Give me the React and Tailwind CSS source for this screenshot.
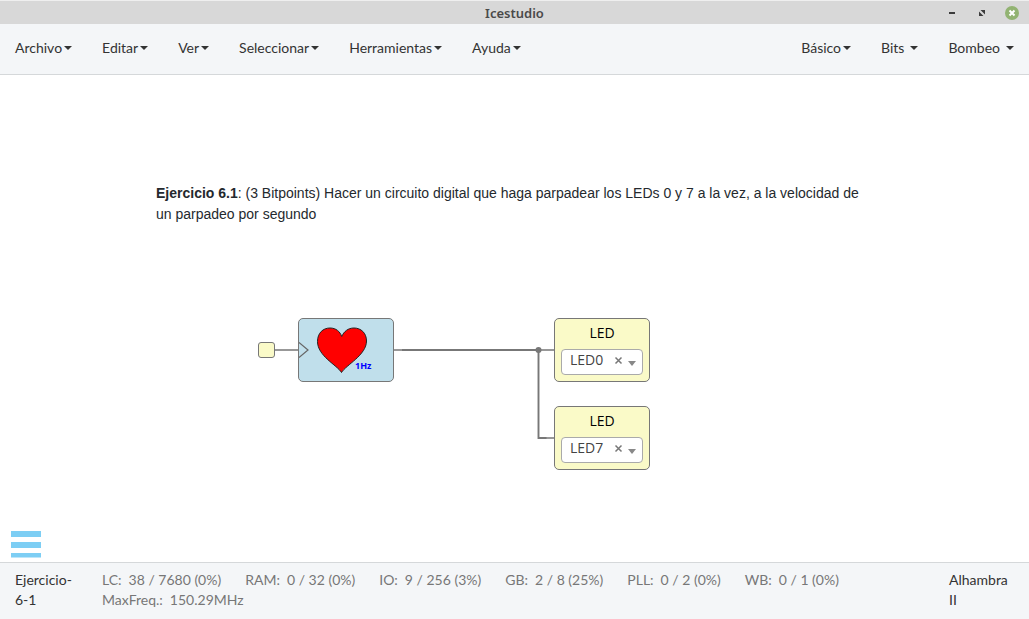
const mainMenus = ["Archivo", "Editar", "Ver", "Seleccionar", "Herramientas", "Ayuda"];

const collections = [
  { name: "Básico", spaced: false },
  { name: "Bits", spaced: true },
  { name: "Bombeo", spaced: true },
];

const resources = [
  ["LC:", "38 / 7680 (0%)"],
  ["RAM:", "0 / 32 (0%)"],
  ["IO:", "9 / 256 (3%)"],
  ["GB:", "2 / 8 (25%)"],
  ["PLL:", "0 / 2 (0%)"],
  ["WB:", "0 / 1 (0%)"],
  ["MaxFreq.:", "150.29MHz"],
];

function Caret({ className }) {
  return (
    <svg aria-hidden="true" viewBox="0 0 8 4" preserveAspectRatio="none" className={`w-2 ${className}`}>
      <path d="M0 0h8L4 4z" fill="currentColor" />
    </svg>
  );
}

function MenuButton({ label, spaced }) {
  return (
    <button type="button" className="flex items-center px-[15px] pt-[14px] pb-4 leading-5">
      {label}
      <Caret className={spaced ? "ml-[6px] h-1" : "ml-[2px] h-1"} />
    </button>
  );
}

function TitleBar() {
  return (
    <header className="relative flex h-6 items-center justify-center border-t border-[#efefef] bg-[#d8d8d8]">
      <h1 className="font-['Noto_Sans',sans-serif] text-[13px] leading-5 font-semibold text-[#4a4a4a]">Icestudio</h1>
      <div className="absolute inset-y-0 right-[10px] flex items-center gap-4">
        <button type="button" aria-label="Minimizar" className="size-[14px]">
          <svg viewBox="0 0 14 14" className="size-full">
            <path d="M4 6h6v2H4z" fill="#3c3c3c" />
          </svg>
        </button>
        <button type="button" aria-label="Maximizar" className="size-[14px]">
          <svg viewBox="0 0 14 14" className="size-full">
            <path d="M5.500 4H10v4.500zM4 5.500V10h4.500z" fill="#3c3c3c" />
          </svg>
        </button>
        <button type="button" aria-label="Cerrar" className="size-[14px]">
          <svg viewBox="0 0 14 14" className="size-full">
            <circle cx="7" cy="7" r="7" fill="#92b372" />
            <path d="M4.5 4.5l5 5M9.5 4.5l-5 5" stroke="#fff" strokeWidth="2" />
          </svg>
        </button>
      </div>
    </header>
  );
}

function LedBlock({ pin, className }) {
  const id = `pin-${pin}`;
  return (
    <div className={`absolute h-16 w-24 rounded-[5px] border border-[#777] bg-[#fafac8] px-[6px] pt-1 ${className}`}>
      <label htmlFor={id} className="block text-center font-['Open_Sans',sans-serif] text-[14px] leading-5 text-black">
        LED
      </label>
      <div className="relative mt-[6px] h-[26px]">
        <select
          id={id}
          defaultValue={pin}
          className="block size-full appearance-none rounded-[4px] border border-[#aaa] bg-white pb-1 pl-2 font-['Open_Sans',sans-serif] text-[14px] leading-5 text-[#444]"
        >
          <option>LED0</option>
          <option>LED7</option>
        </select>
        <button type="button" aria-label="Quitar pin" className="absolute top-[7px] right-5 size-[9px]">
          <svg viewBox="0 0 9 9" className="size-full">
            <path d="M1.500 1.500l6 6M7.500 1.500l-6 6" stroke="#777" strokeWidth="1.500" />
          </svg>
        </button>
        <Caret className="pointer-events-none absolute top-3 right-[7px] h-[5px] text-[#888]" />
      </div>
    </div>
  );
}

function Circuit() {
  return (
    <div className="absolute top-[243px] left-[258px] h-[152px] w-[392px]">
      <svg aria-hidden="true" viewBox="0 0 392 152" className="absolute inset-0 size-full" fill="none" stroke="#777">
        <path d="M16 32h24M136 32h8M280 32h16M288 120h8" strokeWidth="1.500" />
        <path d="M144 32h137M280.500 32v88h8" strokeWidth="1.900" />
        <circle cx="280.500" cy="32" r="3" fill="#777" stroke="none" />
      </svg>
      <div className="absolute top-6 left-0 h-4 w-[17px] rounded-[3px] border border-[#777] bg-[#fafac8]" />
      <div className="absolute top-0 left-10 h-16 w-24 rounded-[5px] border border-[#777] bg-[#c0dfeb]">
        <svg role="img" aria-label="Corazón a 1Hz" viewBox="0 0 94 62" className="size-full">
          <path d="M0 23.500l9 7.500-9 7.500" fill="none" stroke="#666" strokeWidth="1.200" />
          <path
            d="M42.500 53.500C38 46 18.500 37 18.500 22.500C18.500 14 24 9 31 9C37 9 41 12.500 42.700 17.500C45 12.500 49 9 55 9C62 9 67.500 14 67.500 22C67.500 36 47 46 42.500 53.500Z"
            fill="#f00"
            stroke="#222"
          />
          <text x="56" y="50" fill="#00f" fontSize="9" fontWeight="700" fontFamily="'Open Sans', sans-serif">
            1Hz
          </text>
        </svg>
      </div>
      <LedBlock pin="LED0" className="top-0 right-0" />
      <LedBlock pin="LED7" className="right-0 bottom-0" />
    </div>
  );
}

export default function App() {
  return (
    <div className="flex min-h-screen flex-col bg-white font-['Lato',sans-serif] text-[14px] leading-5 text-[#333]">
      <TitleBar />
      <nav className="flex justify-between border-b border-[#d5d8da] bg-[#f4f6f8]">
        <div className="flex">
          {mainMenus.map((name) => (
            <MenuButton key={name} label={name} />
          ))}
        </div>
        <div className="flex">
          {collections.map(({ name, spaced }) => (
            <MenuButton key={name} label={name} spaced={spaced} />
          ))}
        </div>
      </nav>
      <main className="relative min-h-[420px] flex-1">
        <p className="absolute top-[108px] left-[156px] w-[710px] font-['Liberation_Sans',sans-serif] text-[14px] leading-[21px] text-[#24292e]">
          <strong>Ejercicio 6.1</strong>: (3 Bitpoints) Hacer un circuito digital que haga parpadear los LEDs 0 y 7 a la
          vez, a la velocidad de un parpadeo por segundo
        </p>
        <Circuit />
        <button type="button" aria-label="Menú" className="absolute bottom-1 left-[11px] h-7 w-[30px]">
          <svg viewBox="0 0 30 28" className="size-full" fill="#7dcef4">
            <path d="M0 1h30v6H0zM0 12h30v6H0zM0 23h30v4.500H0z" />
          </svg>
        </button>
      </main>
      <footer className="flex border-t border-[#d5d8da] bg-[#f4f6f8] px-[15px] pt-[7px] pb-[9px]">
        <div className="w-[60px] shrink-0">Ejercicio-6-1</div>
        <dl className="ml-[27px] flex flex-1 flex-wrap gap-x-6 text-[#777]">
          {resources.map(([name, value]) => (
            <div key={name} className="flex gap-[7px]">
              <dt>{name}</dt>
              <dd>{value}</dd>
            </div>
          ))}
        </dl>
        <div className="w-[65px] shrink-0">Alhambra II</div>
      </footer>
    </div>
  );
}
